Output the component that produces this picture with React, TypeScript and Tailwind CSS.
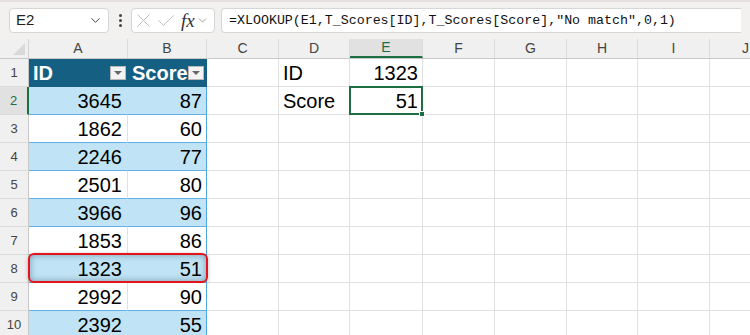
import { ChevronDown } from "lucide-react";

const cols = [
  { key: "A", w: "w-[99px]" },
  { key: "B", w: "w-[79px]" },
  { key: "C", w: "w-[72px]" },
  { key: "D", w: "w-[71px]" },
  { key: "E", w: "w-[73px]" },
  { key: "F", w: "w-[72px]" },
  { key: "G", w: "w-[72px]" },
  { key: "H", w: "w-[71px]" },
  { key: "I", w: "w-[72px]" },
  { key: "J", w: "w-[72px]" },
];

// T_Scores rows 2..10
const scores = [
  [3645, 87],
  [1862, 60],
  [2246, 77],
  [2501, 80],
  [3966, 96],
  [1853, 86],
  [1323, 51],
  [2992, 90],
  [2392, 55],
];

function FilterBtn() {
  return (
    <div className="w-[16px] h-[14px] bg-[#f3f3f3] border border-[#b8b8b8] flex items-center justify-center shrink-0">
      <div className="w-0 h-0 border-l-[4px] border-r-[4px] border-t-[4px] border-l-transparent border-r-transparent border-t-[#666]" />
    </div>
  );
}

function TopBar() {
  return (
    <div className="h-[39px] bg-[#f3f1f0] border-t-[2px] border-[#e6e1df] flex items-center px-[9px]">
      <div className="w-[100px] h-[25px] bg-white rounded-[4px] border border-[#d6d6d6] flex items-center justify-between pl-[6px] pr-[5px]">
        <span className="text-[15px] text-[#222]">E2</span>
        <ChevronDown size={15} strokeWidth={1.6} className="text-[#444]" />
      </div>
      <div className="w-[22px] flex flex-col items-center gap-[2px]">
        <div className="w-[3px] h-[3px] rounded-full bg-[#444]" />
        <div className="w-[3px] h-[3px] rounded-full bg-[#444]" />
        <div className="w-[3px] h-[3px] rounded-full bg-[#444]" />
      </div>
      <div className="w-[84px] h-[25px] bg-white rounded-[4px] border border-[#d6d6d6] flex items-center pl-[5px] pr-[2px]">
        <svg width="13" height="13" viewBox="0 0 13 13" className="shrink-0">
          <path d="M0.5 0.5 L12.5 12.5 M12.5 0.5 L0.5 12.5" stroke="#bdbdbd" strokeWidth="1" fill="none" />
        </svg>
        <svg width="16" height="11" viewBox="0 0 16 11" className="shrink-0 ml-[8px]">
          <path d="M0.5 5.5 L5.5 10.3 L15.5 0.5" stroke="#bdbdbd" strokeWidth="1" fill="none" />
        </svg>
        <span className="ml-[7px] text-[19px] leading-none italic text-[#333]" style={{ fontFamily: '"Liberation Serif", serif' }}>fx</span>
        <ChevronDown size={13} strokeWidth={1.3} className="text-[#777] ml-[1px]" />
      </div>
      <div className="ml-[6px] flex-1 h-[25px] bg-white rounded-l-[4px] border border-r-0 border-[#d6d6d6] flex items-center pl-[7px] whitespace-nowrap overflow-hidden">
        <span className="text-[13.3px] text-[#111]" style={{ fontFamily: '"Liberation Mono", monospace' }}>
          =XLOOKUP(E1,T_Scores[ID],T_Scores[Score],"No match",0,1)
        </span>
      </div>
    </div>
  );
}

function HeaderRow() {
  return (
    <div className="flex h-[20px] bg-[#f0f0f0] border-b border-[#c8c8c8]">
      <div className="w-[29px] shrink-0 border-r border-[#d4d4d4] relative">
        <div className="absolute right-[3px] bottom-[3px] w-0 h-0 border-b-[12px] border-l-[12px] border-b-[#d9d9d9] border-l-transparent" />
      </div>
      {cols.map((c) => (
        <div
          key={c.key}
          className={`${c.w} shrink-0 border-r border-[#dcdcdc] flex items-center justify-center text-[14px] ${
            c.key === "E" ? "bg-[#e1e1e1] border-b-[2px] border-b-[#1e6e43] text-[#1e6e43]" : "text-[#444]"
          }`}
        >
          {c.key}
        </div>
      ))}
    </div>
  );
}

function RowHead({ n, active }: { n: number; active?: boolean }) {
  return (
    <div
      className={`w-[29px] shrink-0 flex items-center justify-center text-[13px] border-b border-[#dcdcdc] ${
        active ? "bg-[#e1e1e1] text-[#1e6e43] border-r-[2px] border-r-[#1e6e43]" : "bg-[#f0f0f0] text-[#444] border-r border-r-[#c8c8c8]"
      }`}
    >
      {n}
    </div>
  );
}

function Empty({ w }: { w: string }) {
  return <div className={`${w} shrink-0 border-r border-b border-[#e1e1e1]`} />;
}

export default function App() {
  return (
    <div className="w-[750px] h-[335px] overflow-hidden bg-white" style={{ fontFamily: '"Liberation Sans", Arial, sans-serif' }}>
      <TopBar />
      <HeaderRow />
      {/* row 1: table header */}
      <div className="flex h-[28px]">
        <RowHead n={1} />
        <div className="w-[99px] shrink-0 bg-[#156082] border-b border-[#156082] flex items-center justify-between pl-[4px] pr-[2px]">
          <span className="text-[20px] font-bold text-white">ID</span>
          <FilterBtn />
        </div>
        <div className="w-[79px] shrink-0 bg-[#156082] border-b border-r border-[#156082] flex items-center justify-between pl-[4px] pr-[2px]">
          <span className="text-[20px] font-bold text-white">Score</span>
          <FilterBtn />
        </div>
        <Empty w="w-[72px]" />
        <div className="w-[71px] shrink-0 border-r border-b border-[#e1e1e1] flex items-center pl-[4px] text-[20px] text-black">ID</div>
        <div className="w-[73px] shrink-0 border-r border-b border-[#e1e1e1] flex items-center justify-end pr-[4px] text-[20px] text-black">1323</div>
        {cols.slice(5).map((c) => (
          <Empty key={c.key} w={c.w} />
        ))}
      </div>
      {scores.map(([id, sc], i) => {
        const n = i + 2;
        const band = n % 2 === 0;
        return (
          <div key={n} className="flex h-[28px]">
            <RowHead n={n} active={n === 2} />
            <div className="relative flex shrink-0">
              <div
                className={`w-[99px] shrink-0 border-b border-b-[#61b1e2] flex items-center justify-end pr-[5px] text-[20px] text-black ${
                  band ? "bg-[#c0e4f5] border-r border-r-[#c0e4f5]" : "bg-white border-r border-r-[#e1e1e1]"
                }`}
              >
                {id}
              </div>
              <div
                className={`w-[79px] shrink-0 border-b border-b-[#61b1e2] border-r border-r-[#4ea6dc] flex items-center justify-end pr-[4px] text-[20px] text-black ${
                  band ? "bg-[#c0e4f5]" : "bg-white"
                }`}
              >
                {sc}
              </div>
              {n === 8 && (
                <div className="absolute -left-[1px] -top-[2px] w-[180px] h-[30px] rounded-[6px] border-2 border-[#e3141c] shadow-[inset_0_0_7px_rgba(40,70,90,0.45),0_1px_4px_rgba(0,0,0,0.25)]" />
              )}
            </div>
            <Empty w="w-[72px]" />
            {n === 2 ? (
              <>
                <div className="w-[71px] shrink-0 border-r border-b border-[#e1e1e1] flex items-center pl-[4px] text-[20px] text-black">Score</div>
                <div className="w-[73px] shrink-0 border-r border-b border-[#e1e1e1] relative flex items-center justify-end pr-[4px] text-[20px] text-black">
                  51
                  <div className="absolute -left-[1px] -top-[1px] w-[74px] h-[29px] border-2 border-[#1e6e43]" />
                  <div className="absolute -right-[3px] -bottom-[3px] w-[6px] h-[6px] bg-[#1e6e43] border border-white" />
                </div>
              </>
            ) : (
              <>
                <Empty w="w-[71px]" />
                <Empty w="w-[73px]" />
              </>
            )}
            {cols.slice(5).map((c) => (
              <Empty key={c.key} w={c.w} />
            ))}
          </div>
        );
      })}
    </div>
  );
}
